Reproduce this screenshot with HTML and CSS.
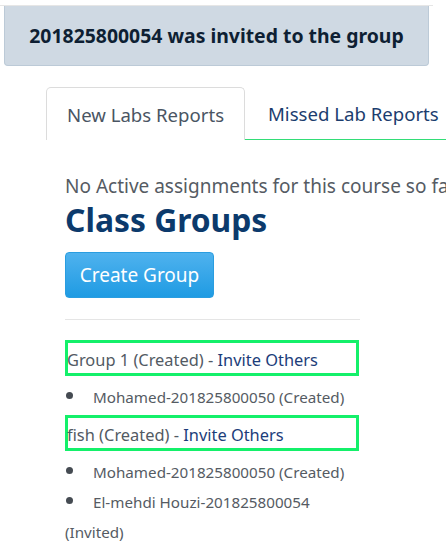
FILE: index.html
```
<!DOCTYPE html>
<html>
<head>
<meta charset="utf-8">
<link rel="stylesheet" href="styles.css">
</head>
<body>
<div class="top">
  <div class="alert">201825800054 was invited to the group</div>
</div>
<div class="tabs">
  <div class="tab active">New Labs Reports</div>
  <div class="tab">Missed Lab Reports</div>
  <div class="tab-rest"></div>
</div>
<div class="content">
  <p class="empty">No Active assignments for this course so far</p>
  <h1 class="title">Class Groups</h1>
  <button class="btn">Create Group</button>
  <div class="rule"></div>
  <div class="group"><span class="gname">Group 1 (Created) -&nbsp;</span><a class="link">Invite Others</a></div>
  <ul class="members">
    <li><span class="dot"></span>Mohamed-201825800050 (Created)</li>
  </ul>
  <div class="group"><span class="gname">fish (Created) -&nbsp;</span><a class="link">Invite Others</a></div>
  <ul class="members">
    <li><span class="dot"></span>Mohamed-201825800050 (Created)</li>
    <li><span class="dot"></span>El-mehdi Houzi-201825800054 (Invited)</li>
  </ul>
</div>
</body>
</html>
```
FILE: styles.css
```
html, body {
  margin: 0;
  padding: 0;
  background: #fff;
  font-family: "Noto Sans", "Open Sans", sans-serif;
  overflow: hidden;
}
.top {
  border-top: 1px solid #e6e6e6;
  margin-top: 5px;
  width: 433px;
}
.alert {
  margin: 0 0 0 4px;
  width: 423px;
  height: 59px;
  background: #cfd9e3;
  border: 1px solid #bccad7;
  border-top: none;
  border-radius: 0 0 4px 4px;
  display: flex;
  align-items: center;
  justify-content: center;
  font-weight: bold;
  font-size: 19.4px;
  color: #0e1f33;
}
.tabs {
  display: flex;
  margin-top: 21px;
  padding-left: 46px;
  height: 53px;
}
.tab {
  padding: 0 0 0 23px;
  display: flex;
  align-items: center;
  font-size: 18.6px;
  color: #1c3d6e;
  border-bottom: 1.5px solid #33dd77;
  white-space: nowrap;
}
.tab.active {
  box-sizing: border-box;
  width: 199px;
  flex: none;
  color: #4a5563;
  border: 1px solid #dcdcdc;
  border-bottom: none;
  border-radius: 5px 5px 0 0;
  padding: 0 0 0 20px;
}
.tab-rest {
  flex: 1;
  border-bottom: 1.5px solid #33dd77;
}
.content {
  padding-left: 65px;
}
.empty {
  margin: 34px 0 0 0;
  font-size: 19px;
  color: #555b63;
  white-space: nowrap;
  line-height: 24px;
}
.title {
  margin: 2px 0 0 0;
  font-size: 31.8px;
  font-weight: bold;
  color: #0c3a6c;
  line-height: 40px;
}
.btn {
  margin-top: 12px;
  width: 149px;
  height: 46px;
  border: 1px solid #2a9de0;
  border-radius: 4px;
  background: linear-gradient(#4fb2ee, #1f9be3);
  color: #fff;
  font-family: inherit;
  font-size: 19px;
  padding: 0;
}
.rule {
  margin-top: 21px;
  width: 295px;
  border-top: 1px solid #e5e5e5;
}
.group {
  box-sizing: border-box;
  margin-top: 20px;
  width: 294px;
  height: 36px;
  padding-top: 3px;
  border: 3px solid #14f06a;
  display: flex;
  align-items: center;
  font-size: 16.4px;
  white-space: nowrap;
}
.members + .group { margin-top: 0; }
.gname { color: #525a63; margin-left: -1px; }
.link { color: #1c3d7a; }
.members {
  list-style: none;
  margin: 6px 0 3px 0;
  padding: 0;
  width: 295px;
  font-size: 15.2px;
  color: #555b63;
  line-height: 30px;
}
.dot {
  display: inline-block;
  width: 7px;
  height: 7px;
  border-radius: 50%;
  background: #454b52;
  margin: 0 20px 0 1px;
  vertical-align: 4px;
}
```
